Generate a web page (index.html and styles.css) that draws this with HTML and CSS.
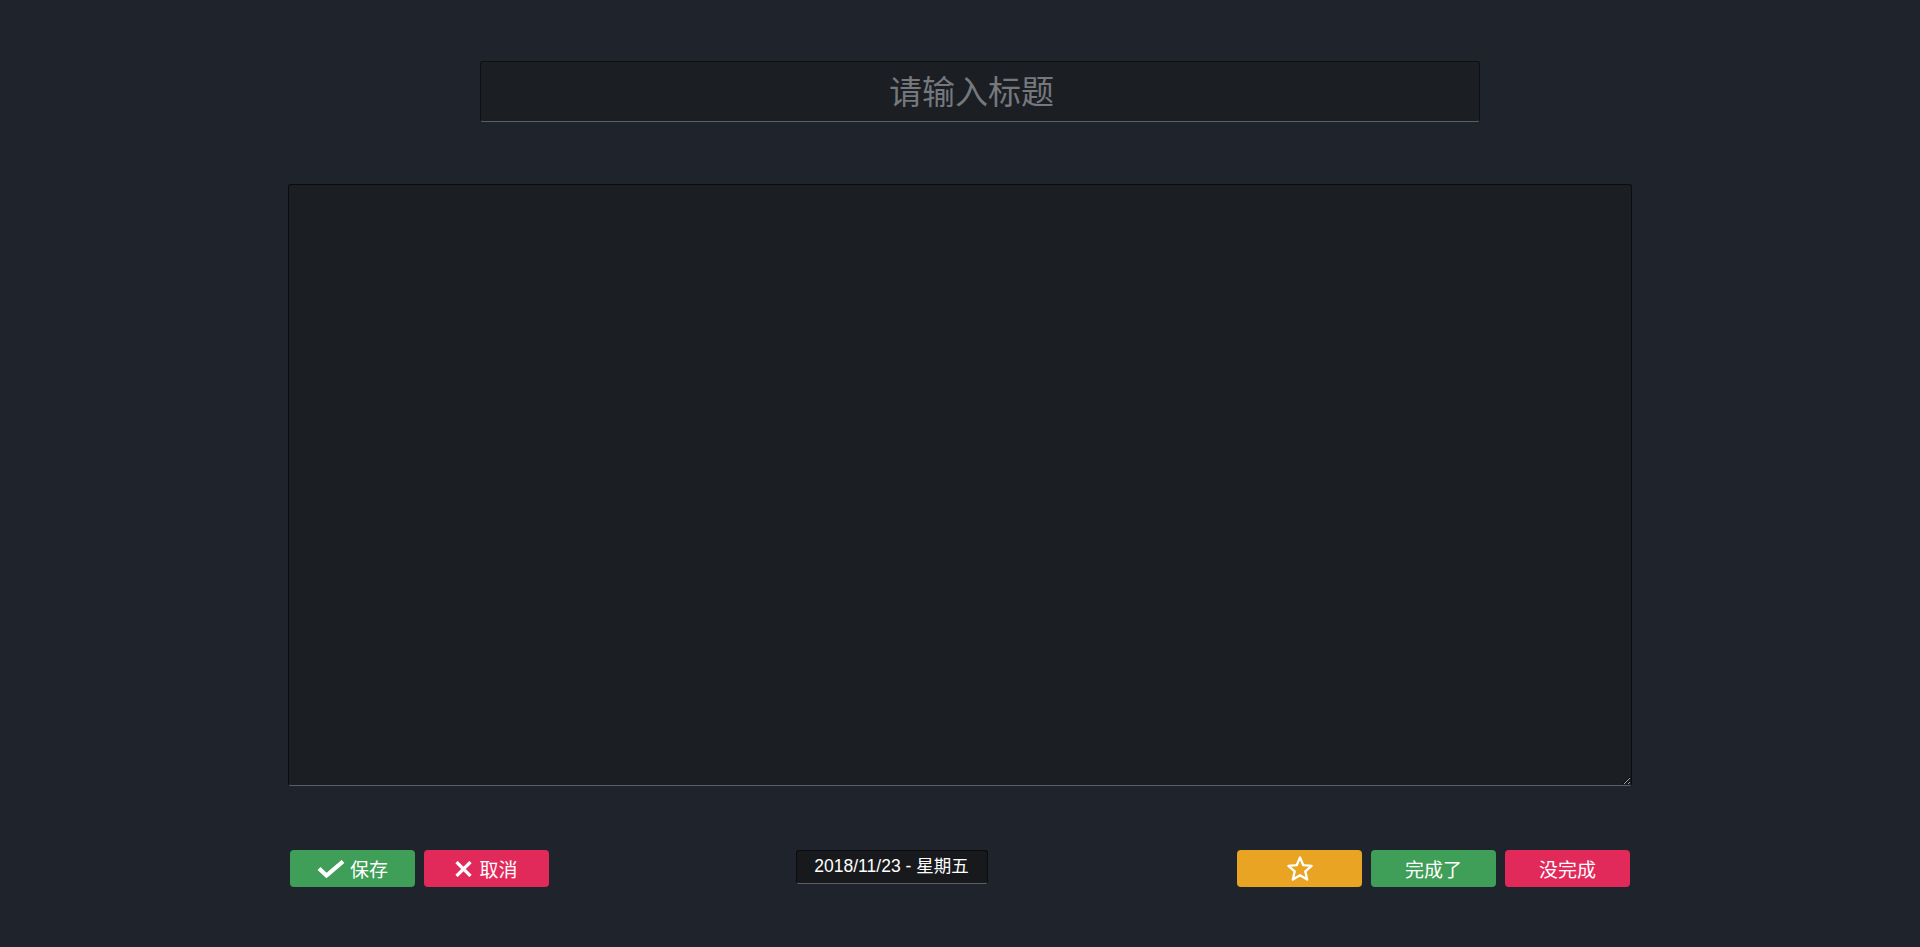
FILE: index.html
```html
<!DOCTYPE html>
<html lang="zh">
<head>
<meta charset="utf-8">
<title>编辑</title>
<link rel="stylesheet" href="styles.css">
</head>
<body>
<div class="page">
  <div class="title-row">
    <input class="title-input" type="text" placeholder="请输入标题">
  </div>
  <div class="body-row">
    <textarea class="content"></textarea>
  </div>
  <div class="bar">
    <div class="group">
      <button class="btn green">
        <svg class="ico-check" width="28" height="18" viewBox="0 0 28 18"><path d="M2 8.5 L9.5 15.5 L26 1.5" fill="none" stroke="#fff" stroke-width="4.2" stroke-linejoin="miter"/></svg>
        <span>保存</span>
      </button>
      <button class="btn red">
        <svg class="ico-x" width="17" height="16" viewBox="0 0 17 16"><path d="M1.5 1 L15.5 15 M15.5 1 L1.5 15" fill="none" stroke="#fff" stroke-width="3.2"/></svg>
        <span>取消</span>
      </button>
    </div>
    <div class="date">2018/11/23 - 星期五</div>
    <div class="group">
      <button class="btn orange">
        <svg width="28" height="28" viewBox="0 0 28 28"><path d="M14 2.5 L17.3 10.2 L25.6 10.9 L19.3 16.4 L21.2 24.6 L14 20.3 L6.8 24.6 L8.7 16.4 L2.4 10.9 L10.7 10.2 Z" fill="none" stroke="#fff" stroke-width="2.3" stroke-linejoin="round"/></svg>
      </button>
      <button class="btn green"><span>完成了</span></button>
      <button class="btn red"><span>没完成</span></button>
    </div>
  </div>
</div>
</body>
</html>
```
FILE: styles.css
```css
html, body {
  margin: 0;
  padding: 0;
  background: #1f242c;
  height: 100%;
}
body {
  font-family: "Liberation Sans", "Noto Sans CJK SC", sans-serif;
  overflow: hidden;
}
.page {
  padding-top: 61px;
}
.title-row {
  padding-left: 480px;
}
.title-input {
  box-sizing: border-box;
  display: block;
  width: 1000px;
  height: 61px;
  margin: 0;
  padding: 0 17px 4px 0;
  background: #1b1e23;
  border: 1px solid #0e1013;
  border-bottom-color: #5b5f66;
  border-radius: 3px;
  outline: none;
  text-align: center;
  font-family: "Noto Sans CJK SC", sans-serif;
  font-size: 33px;
  color: #e0e0e0;
}
.title-input::placeholder {
  color: #75787d;
}
.body-row {
  padding-left: 288px;
  margin-top: 62px;
}
.content {
  box-sizing: border-box;
  display: block;
  width: 1344px;
  height: 602px;
  margin: 0;
  padding: 8px;
  background: #1b1e23;
  border: 1px solid #0b0c0e;
  border-bottom-color: #5b5f66;
  border-radius: 3px;
  outline: none;
  color: #e0e0e0;
  font-family: "Noto Sans CJK SC", sans-serif;
  font-size: 16px;
}
.bar {
  margin-top: 64px;
  padding: 0 290px;
  display: flex;
  justify-content: space-between;
  align-items: flex-start;
}
.group {
  display: flex;
  gap: 9px;
}
.btn {
  box-sizing: border-box;
  width: 125px;
  height: 37px;
  border: none;
  border-radius: 4px;
  padding: 0;
  margin: 0;
  display: flex;
  align-items: center;
  justify-content: center;
  gap: 5px;
  color: #fff;
  font-family: "Noto Sans CJK SC", sans-serif;
  font-size: 19px;
  line-height: 1;
  cursor: pointer;
}
.btn span {
  display: block;
  margin-top: -1px;
}
.green { background: #3f9e57; }
.red { background: #e22a5a; }
.orange { background: #e9a424; }
.ico-x { margin-right: 2px; }
.date {
  box-sizing: border-box;
  width: 192px;
  height: 34px;
  background: #17191c;
  border: 1px solid #0b0c0e;
  border-bottom-color: #5b5f66;
  border-radius: 3px;
  color: #fff;
  font-size: 17.5px;
  line-height: 31px;
  text-align: center;
  margin-left: -3px;
}
```
